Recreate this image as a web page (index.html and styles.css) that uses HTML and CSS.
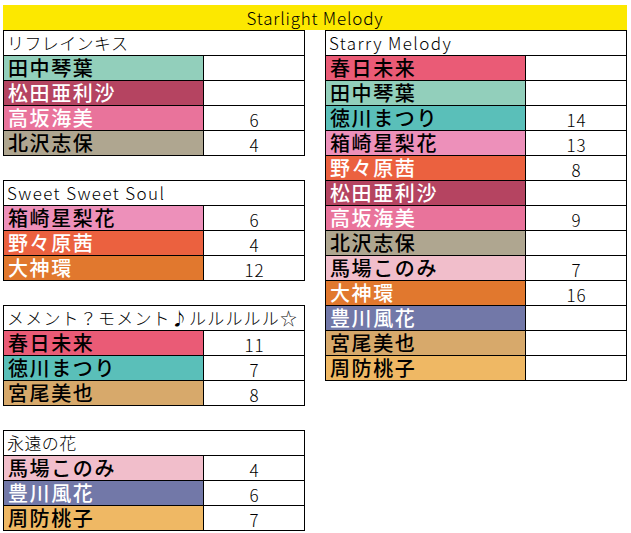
FILE: index.html
```html
<!DOCTYPE html>
<html lang="ja">
<head>
<meta charset="utf-8">
<link rel="stylesheet" href="styles.css">
</head>
<body>
<div class="sheet">
  <div class="banner">Starlight Melody</div>
  <div class="columns">
    <div class="col">
      <div class="unit">
        <div class="title">リフレインキス</div>
        <div class="name kotoha">田中琴葉</div><div class="val"></div>
        <div class="name arisa">松田亜利沙</div><div class="val"></div>
        <div class="name umi">高坂海美</div><div class="val">6</div>
        <div class="name shiho">北沢志保</div><div class="val">4</div>
      </div>
      <div class="unit">
        <div class="title latin">Sweet Sweet Soul</div>
        <div class="name serika">箱崎星梨花</div><div class="val">6</div>
        <div class="name akane">野々原茜</div><div class="val">4</div>
        <div class="name tamaki">大神環</div><div class="val">12</div>
      </div>
      <div class="unit">
        <div class="title wide">メメント？モメント♪ルルルルル☆</div>
        <div class="name mirai">春日未来</div><div class="val">11</div>
        <div class="name matsuri">徳川まつり</div><div class="val">7</div>
        <div class="name miya">宮尾美也</div><div class="val">8</div>
      </div>
      <div class="unit">
        <div class="title">永遠の花</div>
        <div class="name konomi">馬場このみ</div><div class="val">4</div>
        <div class="name fuka">豊川風花</div><div class="val">6</div>
        <div class="name momoko">周防桃子</div><div class="val">7</div>
      </div>
    </div>
    <div class="col">
      <div class="unit">
        <div class="title latin">Starry Melody</div>
        <div class="name mirai">春日未来</div><div class="val"></div>
        <div class="name kotoha">田中琴葉</div><div class="val"></div>
        <div class="name matsuri">徳川まつり</div><div class="val">14</div>
        <div class="name serika">箱崎星梨花</div><div class="val">13</div>
        <div class="name akane">野々原茜</div><div class="val">8</div>
        <div class="name arisa">松田亜利沙</div><div class="val"></div>
        <div class="name umi">高坂海美</div><div class="val">9</div>
        <div class="name shiho">北沢志保</div><div class="val"></div>
        <div class="name konomi">馬場このみ</div><div class="val">7</div>
        <div class="name tamaki">大神環</div><div class="val">16</div>
        <div class="name fuka">豊川風花</div><div class="val"></div>
        <div class="name miya">宮尾美也</div><div class="val"></div>
        <div class="name momoko">周防桃子</div><div class="val"></div>
      </div>
    </div>
  </div>
</div>
</body>
</html>
```
FILE: styles.css
```css
html, body {
  margin: 0;
  background: #fff;
}
body {
  font-family: "Noto Sans CJK JP", "Noto Sans", sans-serif;
  color: #000;
}
.sheet {
  padding: 5px 0 0 3px;
}
.banner {
  width: 624px;
  height: 25px;
  background: #fce800;
  text-align: center;
  font-size: 17px;
  line-height: 25px;
  font-weight: 300;
  letter-spacing: 0.8px;
}
.columns {
  display: flex;
  gap: 20px;
  align-items: flex-start;
}
.col {
  display: flex;
  flex-direction: column;
  gap: 24px;
}
.unit {
  display: grid;
  grid-template-columns: 199px 100px;
  grid-auto-rows: 24px;
  gap: 1px;
  background: #000;
  border: 1px solid #000;
}
.unit > div {
  background: #fff;
  white-space: nowrap;
}
.title {
  grid-column: 1 / 3;
  font-size: 17px;
  line-height: 24px;
  padding-left: 3px;
  font-weight: 300;
  letter-spacing: 0.4px;
}
.title.latin {
  letter-spacing: 1.4px;
}
.title.wide {
  letter-spacing: 1.2px;
}
.name {
  font-size: 20px;
  line-height: 24px;
  padding-left: 4px;
  letter-spacing: 1.6px;
  font-weight: 500;
}
.val {
  text-align: center;
  font-size: 17px;
  line-height: 28px;
  font-weight: 300;
  letter-spacing: 1px;
  text-indent: 1px;
}
.unit > .kotoha { background: #92cfbb; }
.unit > .arisa { background: #b54461; color: #fff; }
.unit > .umi { background: #e9739b; color: #fff; }
.unit > .shiho { background: #afa690; }
.unit > .serika { background: #ed90ba; }
.unit > .akane { background: #eb613f; color: #fff; }
.unit > .tamaki { background: #e1782e; color: #fff; }
.unit > .mirai { background: #ea5b76; }
.unit > .matsuri { background: #5abfb9; }
.unit > .miya { background: #d7a96b; }
.unit > .konomi { background: #f1becb; }
.unit > .fuka { background: #7278a8; color: #fff; }
.unit > .momoko { background: #efb864; }
```
